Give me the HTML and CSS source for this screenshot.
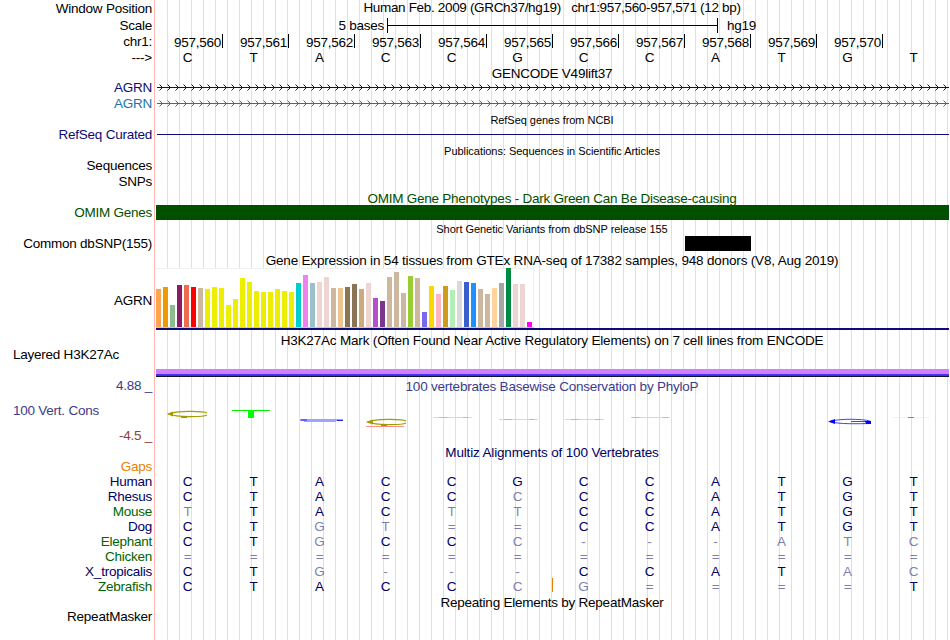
FILE: index.html
```
<!DOCTYPE html>
<html lang="en">
<head>
    <meta charset="UTF-8">
    <meta name="viewport" content="width=device-width, initial-scale=1.0">
    <title>Human chr1:957,560-957,571</title>
    <link rel="stylesheet" href="styles.css">
</head>
<body>
    <div class="browser">
        <!-- ruler -->
        <div class="row h17">
            <div class="label">Window Position</div>
            <div class="data title t-pos"><span>Human Feb. 2009 (GRCh37/hg19) &nbsp; chr1:957,560-957,571 (12 bp)</span></div>
        </div>
        <div class="row h17">
            <div class="label">Scale</div>
            <div class="data scale">
                <span class="scale-text">5 bases</span>
                <span class="scale-bar"></span>
                <span class="scale-db">hg19</span>
            </div>
        </div>
        <div class="row h16">
            <div class="label">chr1:</div>
            <div class="data positions" id="positions"></div>
        </div>
        <div class="row h16">
            <div class="label arrow">---&gt;</div>
            <div class="data bases" data-seq="CTACCGCCATGT"></div>
        </div>

        <!-- genes -->
        <div class="row h14">
            <div class="label"></div>
            <div class="data title t-gencode"><span>GENCODE V49lift37</span></div>
        </div>
        <div class="row h16 navy">
            <div class="label">AGRN</div>
            <div class="data">
                <svg class="gene" width="794" height="16">
                    <defs>
                        <pattern id="chev" width="8" height="16" patternUnits="userSpaceOnUse">
                            <path d="M4.5 4.5l3 3l-3 3" fill="none" stroke="#0c0c78"/>
                        </pattern>
                    </defs>
                    <rect x="2" y="7" width="792" height="1" fill="#0c0c78"/>
                    <rect x="2" y="0" width="792" height="16" fill="url(#chev)"/>
                </svg>
            </div>
        </div>
        <div class="row h16 blue">
            <div class="label">AGRN</div>
            <div class="data">
                <svg class="gene" width="794" height="16">
                    <defs>
                        <pattern id="chev2" width="8" height="16" patternUnits="userSpaceOnUse">
                            <path d="M4.5 4.5l3 3l-3 3" fill="none" stroke="#1874b4"/>
                        </pattern>
                    </defs>
                    <rect x="2" y="7" width="792" height="1" fill="#1874b4"/>
                    <rect x="2" y="0" width="792" height="16" fill="url(#chev2)"/>
                </svg>
            </div>
        </div>
        <div class="row h15">
            <div class="label"></div>
            <div class="data title small t-refseq"><span>RefSeq genes from NCBI</span></div>
        </div>
        <div class="row h16 navy">
            <div class="label">RefSeq Curated</div>
            <div class="data"><div class="refseq-line"></div></div>
        </div>
        <div class="row h15">
            <div class="label"></div>
            <div class="data title small t-pubs"><span>Publications: Sequences in Scientific Articles</span></div>
        </div>
        <div class="row h16"><div class="label">Sequences</div><div class="data"></div></div>
        <div class="row h16"><div class="label">SNPs</div><div class="data"></div></div>
        <div class="row h15 green">
            <div class="label"></div>
            <div class="data title t-omim"><span>OMIM Gene Phenotypes - Dark Green Can Be Disease-causing</span></div>
        </div>
        <div class="row h15 green">
            <div class="label">OMIM Genes</div>
            <div class="data"><div class="omim-bar"></div></div>
        </div>

        <!-- variants -->
        <div class="row h16">
            <div class="label"></div>
            <div class="data title small t-dbsnp"><span>Short Genetic Variants from dbSNP release 155</span></div>
        </div>
        <div class="row h16">
            <div class="label">Common dbSNP(155)</div>
            <div class="data"><div class="snp"></div></div>
        </div>

        <!-- expression -->
        <div class="row h16">
            <div class="label"></div>
            <div class="data title t-gtex"><span>Gene Expression in 54 tissues from GTEx RNA-seq of 17382 samples, 948 donors (V8, Aug 2019)</span></div>
        </div>
        <div class="row gtex-row">
            <div class="label">AGRN</div>
            <div class="data">
                <div class="gtex" id="gtex"></div>
                <div class="gtex-gene"></div>
            </div>
        </div>

        <!-- regulation -->
        <div class="row h17">
            <div class="label"></div>
            <div class="data title t-h3k"><span>H3K27Ac Mark (Often Found Near Active Regulatory Elements) on 7 cell lines from ENCODE</span></div>
        </div>
        <div class="row h3k-row">
            <div class="label left">Layered H3K27Ac</div>
            <div class="data"><div class="h3k"></div></div>
        </div>

        <!-- conservation -->
        <div class="row cons-row">
            <div class="cons-labels">
                <div class="cons-max">4.88 _</div>
                <div class="cons-name">100 Vert. Cons</div>
                <div class="cons-min">-4.5 _</div>
            </div>
            <div class="data">
                <div class="title t-phylop"><span>100 vertebrates Basewise Conservation by PhyloP</span></div>
                <svg class="logo" viewBox="155 394 794 50" width="794" height="50" fill="none">
                    <g stroke="#a39c00" stroke-width="1.3">
                        <path d="M207 413C203 410.8 176 410.6 169 414C176 417.4 203 417.2 207 415"/>
                        <path d="M167 414l6-2.5v5z" fill="#a39c00" stroke="none"/>
                        <path d="M406 421C402 418.8 375 418.6 368 422C375 425.4 402 425.2 406 423"/>
                        <path d="M366 422l7-2.5v5z" fill="#a39c00" stroke="none"/>
                    </g>
                    <path d="M181 417.5h6M381 425.5h6M908 417.5h6" stroke="#00e800"/>
                    <path d="M232 410.5h38" stroke="#00f000"/>
                    <path d="M248 410h6v8h-6z" fill="#00ff00"/>
                    <path d="M300 420h43" stroke="#a0a0ff" stroke-width="2"/>
                    <path d="M301 420h6M337 420.5h6" stroke="#2020ff"/>
                    <path d="M304 421.5h32M366 426.5h38" stroke="#ff8c8c"/>
                    <path d="M433 417.5h39M499 419.5h39M565 419.5h39M631 417.5h39" stroke="#dcdcb4"/>
                    <path d="M439 417.5h8M463 417.5h5M504 419.5h8M529 419.5h5M571 419.5h8M595 419.5h5M632 417.5h7M663 417.5h5" stroke="#c4c08c"/>
                    <path d="M892 417.5h38" stroke="#00e800" opacity=".1"/>
                    <path d="M870 421C862 418.7 838 418.5 830 421.5C838 424.5 860 423.7 870 423.5M851 421.5h18" stroke="#4040ff"/>
                    <path d="M828 421.5l7-2.5v5zM865 421h6v3h-5z" fill="#0000ff"/>
                </svg>
            </div>
        </div>

        <!-- alignments -->
        <div class="row h15 darknavy">
            <div class="label"></div>
            <div class="data title t-multiz"><span>Multiz Alignments of 100 Vertebrates</span></div>
        </div>
        <div class="row h15 orange"><div class="label">Gaps</div><div class="data"></div></div>
        <div class="row h15 darknavy"><div class="label">Human</div><div class="data bases" data-seq="CTACCGCCATGT"></div></div>
        <div class="row h15 darknavy"><div class="label">Rhesus</div><div class="data bases" data-seq="CTACCcCCATGT"></div></div>
        <div class="row h15 darkgreen"><div class="label">Mouse</div><div class="data bases" data-seq="tTACttCCATGT"></div></div>
        <div class="row h15 darknavy"><div class="label">Dog</div><div class="data bases" data-seq="CTgt==CCATGT"></div></div>
        <div class="row h15 darkgreen"><div class="label">Elephant</div><div class="data bases" data-seq="CTgCCc---atc"></div></div>
        <div class="row h15 darkgreen"><div class="label">Chicken</div><div class="data bases" data-seq="============"></div></div>
        <div class="row h15 darknavy"><div class="label">X_tropicalis</div><div class="data bases" data-seq="CTg---CCATac"></div></div>
        <div class="row h15 darkgreen">
            <div class="label">Zebrafish</div>
            <div class="data bases" data-seq="CTACCcg====T"><i class="insert"></i></div>
        </div>

        <!-- repeats -->
        <div class="row h15">
            <div class="label"></div>
            <div class="data title t-rmsk"><span>Repeating Elements by RepeatMasker</span></div>
        </div>
        <div class="row h15"><div class="label">RepeatMasker</div><div class="data"></div></div>
    </div>

    <script src="script.js"></script>
</body>
</html>
```
FILE: styles.css
```
* {
    margin: 0;
    padding: 0;
    box-sizing: border-box;
}

body {
    background: #fff;
    font-family: "Liberation Sans", Arial, Helvetica, sans-serif;
    font-size: 13.5px;
    letter-spacing: -0.24px;
    color: #000;
}

.browser {
    width: 949px;
    height: 640px;
    overflow: hidden;
    background:
        linear-gradient(#ffb4b4, #ffb4b4) 154px 0 / 1px 100% no-repeat,
        repeating-linear-gradient(to right, #dcdcff 0, #dcdcff 1px, transparent 1px, transparent 12px) 167px 0 / 782px 100% no-repeat;
}

.row {
    display: grid;
    grid-template-columns: 155px 794px;
}

.h14 { height: 14px; line-height: 14px; }
.h15 { height: 15px; line-height: 15px; }
.h16 { height: 16px; line-height: 16px; }
.h17 { height: 17px; line-height: 17px; }

.navy { color: #0c0c78; }
.blue { color: #1874b4; }
.green { color: #005000; }
.darknavy { color: #000064; }
.darkgreen { color: #006400; }
.orange { color: #e68200; }

.label {
    padding-right: 3px;
    text-align: right;
    white-space: nowrap;
}

.label.left {
    padding-left: 13px;
    text-align: left;
}

.title {
    padding-top: 1px;
    text-align: center;
    white-space: nowrap;
}

.small {
    font-size: 11px;
    letter-spacing: -0.04px;
}

.t-pos {
    padding-top: 0;
    line-height: 15px;
    letter-spacing: -0.33px;
}

.t-gtex,
.t-h3k {
    letter-spacing: -0.18px;
}

.t-h3k {
    padding-top: 2px;
}

.t-multiz {
    letter-spacing: -0.16px;
}

/* ruler */
.scale {
    display: flex;
    align-items: center;
}

.scale-text {
    width: 229px;
    text-align: right;
}

.scale-bar {
    width: 331px;
    height: 15px;
    margin: 0 9px 0 3px;
    border: solid #000;
    border-width: 0 1px;
    background: linear-gradient(#000, #000) 0 7px / 100% 1px no-repeat;
}

.positions {
    display: flex;
    padding-left: 2px;
}

.positions span {
    width: 66px;
    height: 14px;
    padding-right: 1px;
    border-right: 1px solid #000;
    line-height: 17px;
    text-align: right;
}

.bases {
    display: grid;
    grid-template-columns: repeat(12, 66px);
    position: relative;
}

.bases span {
    padding-right: 1px;
    color: #000064;
    text-align: center;
}

.bases .diff {
    opacity: .5;
}

.arrow + .bases span {
    color: #000;
}

.insert {
    position: absolute;
    left: 397px;
    top: -1px;
    width: 1px;
    height: 14px;
    background: #e68200;
}

/* genes */
.gene,
.logo {
    display: block;
}

.refseq-line {
    height: 1px;
    margin: 7px 0 0 2px;
    background: #0c0c78;
}

.omim-bar {
    height: 15px;
    margin-left: 1px;
    background: #005000;
}

.snp {
    width: 66px;
    height: 15px;
    margin-left: 530px;
    background: #000;
}

/* expression */
.gtex-row {
    height: 62px;
    line-height: 66px;
}

.gtex {
    display: flex;
    align-items: flex-end;
    gap: 2px;
    width: 378px;
    height: 60px;
    margin-left: 1px;
    background: #fff;
    border-bottom: 1px solid #c8c8c8;
    box-shadow: inset 0 1px #f0f0f0, inset -1px 0 #f0f0f0;
}

.gtex i {
    width: 5px;
}

.gtex-gene {
    height: 2px;
    margin-left: 1px;
    background: #0c0c78;
}

/* regulation */
.h3k-row {
    height: 32px;
    line-height: 16px;
}

.h3k {
    height: 8px;
    margin: 22px 0 0 1px;
    background: linear-gradient(#d080ff 5px, #5038ff 5px, #3c28dc 7px, #101030 7px);
}

/* conservation */
.cons-row {
    height: 65px;
    line-height: 16px;
}

.cons-labels {
    padding-right: 3px;
    text-align: right;
}

.cons-max {
    margin-top: -1px;
    color: #3c3c8c;
}

.cons-name {
    margin: 9px 0;
    padding-left: 13px;
    text-align: left;
    color: #3c3c8c;
}

.cons-min {
    color: #8c3c3c;
}

.t-phylop {
    height: 15px;
    padding-top: 0;
    letter-spacing: -0.22px;
    color: #3c3c8c;
}
```
FILE: script.js
```
const bars = [
    [38, '#ffa54f'], [40, '#ee9a00'], [22, '#8fbc8f'], [42, '#8b1c62'], [42, '#ee6a50'], [40, '#ff0000'],
    [39, '#cdb79e'], [38, '#eeee00'], [40, '#eeee00'], [39, '#eeee00'], [22, '#eeee00'], [28, '#eeee00'],
    [49, '#eeee00'], [45, '#eeee00'], [36, '#eeee00'], [35, '#eeee00'], [35, '#eeee00'], [38, '#eeee00'],
    [36, '#eeee00'], [35, '#eeee00'], [44, '#00cdcd'], [52, '#ee82ee'], [44, '#9ac0cd'], [45, '#eed5d2'],
    [50, '#eed5d2'], [39, '#cdb79e'], [39, '#eec591'], [40, '#8b7355'], [43, '#8b7355'], [38, '#cdaa7d'],
    [44, '#eed5d2'], [29, '#b452cd'], [26, '#7a378b'], [50, '#cdb79e'], [55, '#cdb79e'], [34, '#cdb79e'],
    [51, '#9acd32'], [49, '#cdb79e'], [15, '#7a67ee'], [41, '#ffd700'], [33, '#ffb6c1'], [41, '#cd9b1d'],
    [37, '#b4eeb4'], [46, '#d9d9d9'], [45, '#3a5fcd'], [44, '#1e90ff'], [38, '#cdb79e'], [33, '#cdb79e'],
    [39, '#ffd39b'], [44, '#a6a6a6'], [59, '#008b45'], [43, '#eed5d2'], [43, '#eed5d2'], [5, '#ff00ff']
];

const gtex = document.getElementById('gtex');
bars.forEach(([height, color]) => {
    const bar = document.createElement('i');
    bar.style.height = height + 'px';
    bar.style.background = color;
    gtex.appendChild(bar);
});

const positions = document.getElementById('positions');
for (let pos = 957560; pos <= 957570; pos++) {
    const tick = document.createElement('span');
    tick.textContent = pos.toLocaleString('en-US');
    positions.appendChild(tick);
}

// lower case letters are mismatches and are drawn lighter
document.querySelectorAll('.bases').forEach(row => {
    for (const ch of row.dataset.seq) {
        const cell = document.createElement('span');
        cell.textContent = ch.toUpperCase();
        if (!/[A-Z]/.test(ch)) {
            cell.className = 'diff';
        }
        row.appendChild(cell);
    }
});
```
